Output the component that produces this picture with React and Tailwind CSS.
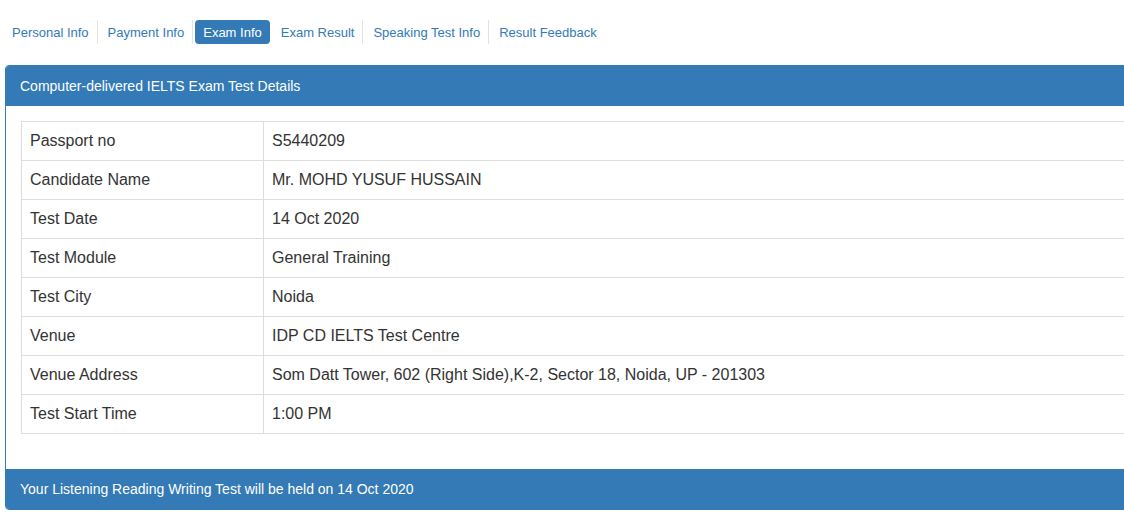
import React from 'react';

const tabs = [
  { label: 'Personal Info' },
  { label: 'Payment Info' },
  { label: 'Exam Info', active: true },
  { label: 'Exam Result' },
  { label: 'Speaking Test Info' },
  { label: 'Result Feedback', last: true },
];

const details = [
  ['Passport no', 'S5440209'],
  ['Candidate Name', 'Mr. MOHD YUSUF HUSSAIN'],
  ['Test Date', '14 Oct 2020'],
  ['Test Module', 'General Training'],
  ['Test City', 'Noida'],
  ['Venue', 'IDP CD IELTS Test Centre'],
  ['Venue Address', 'Som Datt Tower, 602 (Right Side),K-2, Sector 18, Noida, UP - 201303'],
  ['Test Start Time', '1:00 PM'],
];

const App = () => {
  return (
    <div className="w-full min-h-[526px] overflow-hidden bg-white font-['Liberation_Sans',Arial,sans-serif] text-[#333]">
      <div className="w-[1160px] pt-5 pl-[4px]">
        <ul className="flex items-center">
          {tabs.map((tab, i) => (
            <li
              key={tab.label}
              className={
                (i > 0 ? 'ml-[2px] ' : '') +
                (tab.active || tab.last ? 'border-r border-transparent' : 'border-r border-[#e3e3e3]')
              }
            >
              <a
                href="#"
                className={
                  tab.active
                    ? 'block px-2 pt-[5px] pb-[3px] text-[13px] leading-4 rounded bg-[#337ab7] text-white'
                    : 'block px-2 pt-[5px] pb-[3px] text-[13px] leading-4 text-[#337ab7]'
                }
              >
                {tab.label}
              </a>
            </li>
          ))}
        </ul>

        <div className="mt-[21px] ml-[1px] border border-[#337ab7] rounded bg-white">
          <div className="bg-[#337ab7] text-white text-sm leading-5 px-[14px] py-[10px] rounded-t-[3px]">
            Computer-delivered IELTS Exam Test Details
          </div>
          <div className="p-[15px]">
            <table className="w-full border-collapse border border-[#ddd] mb-5 text-base leading-[22px]">
              <tbody>
                {details.map(([k, v]) => (
                  <tr key={k}>
                    <td className="w-[242px] border border-[#ddd] px-2 py-2">{k}</td>
                    <td className="border border-[#ddd] px-2 py-2">{v}</td>
                  </tr>
                ))}
              </tbody>
            </table>
          </div>
          <div className="bg-[#337ab7] text-white text-sm leading-5 px-[14px] py-[10px] rounded-b-[3px]">
            Your Listening Reading Writing Test will be held on 14 Oct 2020
          </div>
        </div>
      </div>
    </div>
  );
};

export default App;
